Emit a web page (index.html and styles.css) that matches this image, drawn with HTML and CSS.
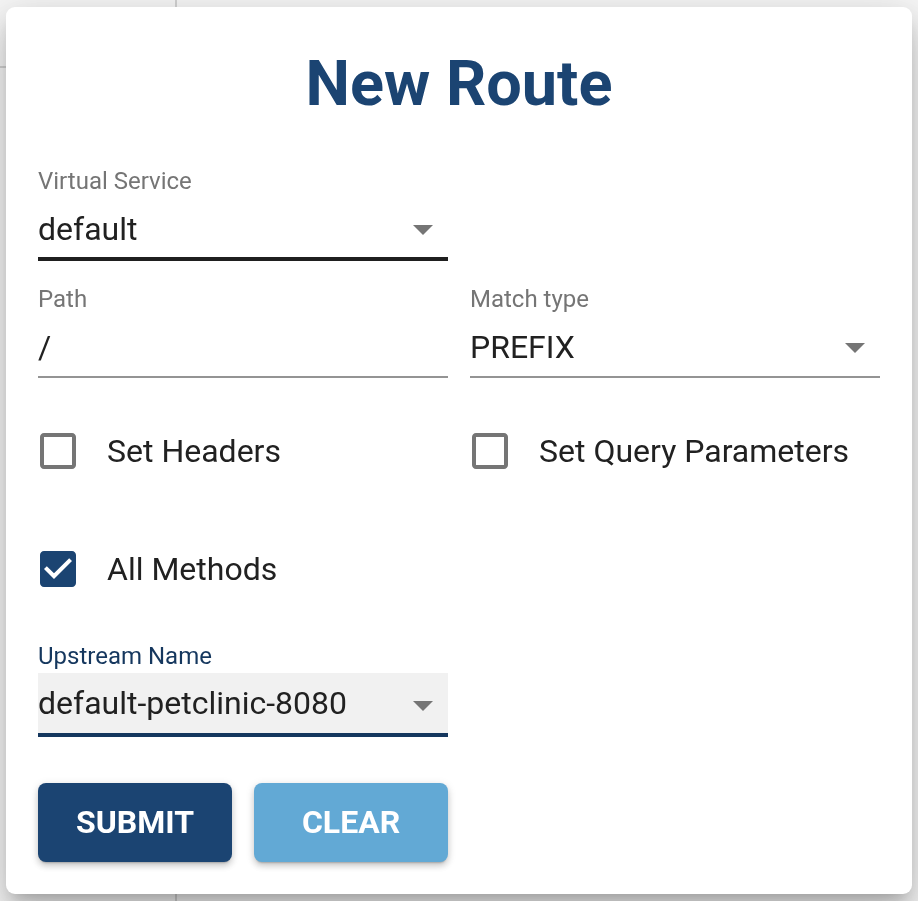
FILE: index.html
```html
<!DOCTYPE html>
<html lang="en">
<head>
<meta charset="utf-8">
<title>New Route</title>
<link rel="stylesheet" href="styles.css">
</head>
<body>
<div class="page">
  <aside class="page-side"><div class="side-head"></div></aside>
  <main class="page-main"></main>
</div>

<div class="dialog" role="dialog" aria-labelledby="dlg-title">
  <h1 class="title" id="dlg-title">New Route</h1>

  <form class="form">
    <div class="row row-first">
      <div class="field">
        <div class="label">Virtual Service</div>
        <div class="control control-hover">
          <span class="value">default</span>
          <svg class="arrow" viewBox="0 0 24 24"><path d="M7 10l5 5 5-5z"/></svg>
        </div>
      </div>
      <div></div>
    </div>

    <div class="row row-path">
      <div class="field">
        <div class="label">Path</div>
        <div class="control">
          <span class="value">/</span>
        </div>
      </div>
      <div class="field">
        <div class="label">Match type</div>
        <div class="control">
          <span class="value">PREFIX</span>
          <svg class="arrow" viewBox="0 0 24 24"><path d="M7 10l5 5 5-5z"/></svg>
        </div>
      </div>
    </div>

    <div class="row row-checks">
      <label class="check">
        <span class="check-icon">
          <svg viewBox="0 0 24 24"><path class="box-off" d="M19 5v14H5V5h14m0-2H5c-1.11 0-2 .9-2 2v14c0 1.1.89 2 2 2h14c1.1 0 2-.9 2-2V5c0-1.1-.9-2-2-2z"/></svg>
        </span>
        <span class="check-label">Set Headers</span>
      </label>
      <label class="check">
        <span class="check-icon">
          <svg viewBox="0 0 24 24"><path class="box-off" d="M19 5v14H5V5h14m0-2H5c-1.11 0-2 .9-2 2v14c0 1.1.89 2 2 2h14c1.1 0 2-.9 2-2V5c0-1.1-.9-2-2-2z"/></svg>
        </span>
        <span class="check-label">Set Query Parameters</span>
      </label>
    </div>

    <div class="row row-methods">
      <label class="check">
        <span class="check-icon">
          <svg viewBox="0 0 24 24"><rect x="5" y="6" width="14" height="12" fill="#fff"/><path class="box-on" d="M19 3H5c-1.11 0-2 .9-2 2v14c0 1.1.89 2 2 2h14c1.11 0 2-.9 2-2V5c0-1.1-.89-2-2-2zm-9 14l-5-5 1.41-1.41L10 14.170l7.59-7.59L19 8l-9 9z"/></svg>
        </span>
        <span class="check-label">All Methods</span>
      </label>
      <div></div>
    </div>

    <div class="row row-upstream">
      <div class="field">
        <div class="label label-focus">Upstream Name</div>
        <div class="control control-filled">
          <span class="value">default-petclinic-8080</span>
          <svg class="arrow arrow-low" viewBox="0 0 24 24"><path d="M7 10l5 5 5-5z"/></svg>
        </div>
      </div>
      <div></div>
    </div>

    <div class="actions">
      <button type="button" class="btn btn-submit">Submit</button>
      <button type="button" class="btn btn-clear">Clear</button>
    </div>
  </form>
</div>
</body>
</html>
```

FILE: styles.css
```css
html, body {
  margin: 0;
  padding: 0;
  height: 100%;
  overflow: hidden;
}

body {
  background: #f7f7f7;
  font-family: Roboto, "Liberation Sans", Arial, sans-serif;
  color: #212121;
}

/* underlying page */
.page {
  display: grid;
  grid-template-columns: 177px 1fr;
  height: 100vh;
}

.page-side {
  border-right: 2px solid #d2d2d2;
}

.side-head {
  height: 66px;
  border-bottom: 2px solid #d2d2d2;
}

/* dialog */
.dialog {
  position: fixed;
  left: 6px;
  top: 7px;
  width: 906px;
  height: 887px;
  box-sizing: border-box;
  padding: 0 32px;
  background: #fff;
  border-radius: 9px;
  box-shadow: 0 11px 15px -7px rgba(0, 0, 0, 0.2),
              0 24px 38px 3px rgba(0, 0, 0, 0.14),
              0 9px 46px 8px rgba(0, 0, 0, 0.12);
}

.title {
  margin: 0;
  padding-top: 40px;
  height: 74px;
  font-size: 63px;
  line-height: 74px;
  font-weight: 700;
  text-align: center;
  color: #1b4472;
}

.form {
  display: flex;
  flex-direction: column;
}

.row {
  display: grid;
  grid-template-columns: 410px 410px;
  column-gap: 22px;
}

.row-first { margin-top: 46px; }
.row-path { margin-top: 24px; }
.row-checks { margin-top: 31px; }
.row-methods { margin-top: 34px; }
.row-upstream { margin-top: 31px; }

.field {
  display: flex;
  flex-direction: column;
}

.label {
  font-size: 24px;
  line-height: 28px;
  color: #757575;
}

.label-focus {
  color: #15375e;
}

.control {
  display: flex;
  align-items: center;
  margin-top: 15px;
  padding-bottom: 10px;
  border-bottom: 2px solid #949494;
}

.control-hover {
  padding-bottom: 9px;
  border-bottom: 4px solid #1f1f1f;
}

.control-filled {
  margin-top: 3px;
  padding-top: 11px;
  padding-bottom: 11px;
  background: #f1f1f1;
  border-bottom: 4px solid #15375e;
}

.value {
  flex: 1;
  font-size: 32px;
  line-height: 38px;
  color: #212121;
  white-space: nowrap;
}

.arrow {
  flex: none;
  width: 48px;
  height: 48px;
  margin: -5px 1px -5px 0;
  fill: #757575;
}

.arrow-low {
  margin-top: -3px;
  margin-bottom: -7px;
}

/* checkboxes */
.check {
  display: flex;
  align-items: center;
  height: 84px;
  margin-left: -22px;
  cursor: pointer;
}

.check-icon {
  display: block;
  padding: 18px;
  width: 48px;
  height: 48px;
  flex: none;
}

.check-icon svg {
  display: block;
  width: 48px;
  height: 48px;
}

.box-off { fill: #757575; }
.box-on { fill: #1b4472; }

.check-label {
  margin-left: 7px;
  font-size: 32px;
  line-height: 38px;
  color: #212121;
  white-space: nowrap;
}

/* buttons */
.actions {
  display: flex;
  gap: 22px;
  margin-top: 46px;
}

.btn {
  width: 194px;
  height: 79px;
  padding: 0 0 2px;
  border: 0;
  border-radius: 8px;
  font-family: Roboto, "Liberation Sans", Arial, sans-serif;
  font-size: 32px;
  font-weight: 700;
  text-transform: uppercase;
  color: #fff;
  box-shadow: 0 3px 2px -2px rgba(0, 0, 0, 0.2),
              0 4px 6px 0 rgba(0, 0, 0, 0.14),
              0 2px 10px 0 rgba(0, 0, 0, 0.12);
  cursor: pointer;
}

.btn-submit { background: #1b4472; }
.btn-clear { background: #62a9d5; }
```
